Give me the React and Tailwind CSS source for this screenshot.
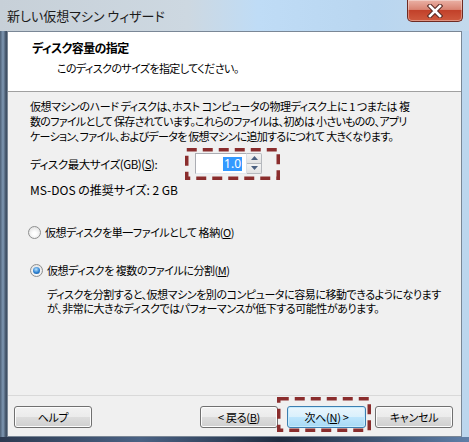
import React from "react";

const jp = "font-['Noto_Sans_CJK_JP','Noto_Sans',sans-serif] [font-feature-settings:'palt']";

function DashBox({ w, h, className }) {
  return (
    <svg className={"pointer-events-none absolute " + className} width={w} height={h}>
      <rect x="1.75" y="1.75" width={w - 3.5} height={h - 3.5} fill="none" stroke="#8a2d2d" strokeWidth="3.5" strokeDasharray="10 6" />
    </svg>
  );
}

function Radio({ checked }) {
  return (
    <span className="inline-flex h-[13px] w-[13px] shrink-0 items-center justify-center rounded-full border border-[#8e8f8f] bg-[radial-gradient(circle_at_50%_60%,#ffffff_20%,#d7d7d7)]">
      {checked && (
        <span className="h-[7px] w-[7px] rounded-full bg-[radial-gradient(circle_at_45%_35%,#b9e4ff,#2b7fd0_55%,#15508f)]" />
      )}
    </span>
  );
}

function Btn({ children, primary }) {
  return (
    <div
      className={
        primary
          ? "flex h-[22px] w-[79px] items-center justify-center rounded-[3px] border border-[#3c7fb1] bg-[linear-gradient(#eaf6fd,#d9f0fc_50%,#bee6fd_50%,#a7d9f5)] text-[11px] leading-[15px] tracking-[-0.3px] text-black shadow-[inset_0_0_0_1px_#c9ecfd]"
          : "flex h-[22px] w-[78px] items-center justify-center rounded-[3px] border border-[#707070] bg-[linear-gradient(#f2f2f2,#ebebeb_50%,#dddddd_50%,#cfcfcf)] text-[11px] leading-[15px] tracking-[-0.3px] text-black shadow-[inset_0_0_0_1px_#fcfcfc]"
      }
    >
      {children}
    </div>
  );
}

export default function App() {
  return (
    <div className={"relative flex h-[442px] w-[469px] flex-col overflow-hidden bg-[linear-gradient(90deg,#4d5f75_0px,#7f98b3_3px,#3f4f63_6px,#9fb8d0_40px,#c4ddf3_200px,#bcd6ee_100%)] " + jp}>
      {/* title bar */}
      <div className="flex h-[31px] shrink-0 items-start justify-between bg-[linear-gradient(90deg,#c7d0d8,#cdd8e1_40%,#bfdcf6_55%,#b9d6f0_80%,#c3d9ec)]">
        <div className="pl-[7px] pt-[8px] text-[13px] leading-[16px] text-[#1b1b1b]">新しい仮想マシン ウィザード</div>
        <div className="mr-[6px] flex h-[22px] w-[56px] items-center justify-center rounded-b-[5px] border border-t-0 border-[#6e2a22] bg-[linear-gradient(#eab1a5,#d98473_45%,#c2412a_50%,#cf5a3f)] shadow-[inset_0_0_0_1px_rgba(255,255,255,0.35)]">
          <svg width="16" height="14" viewBox="0 0 16 14">
            <path d="M3 2 L13 12 M13 2 L3 12" stroke="#5a2a24" strokeWidth="4.6" strokeLinecap="square" />
            <path d="M3 2 L13 12 M13 2 L3 12" stroke="#ffffff" strokeWidth="2.6" strokeLinecap="square" />
          </svg>
        </div>
      </div>

      {/* client */}
      <div className="mx-[7px] flex h-[406px] shrink-0 flex-col border border-[#7a8796] bg-[#f0f0f0] text-black">
        {/* header */}
        <div className="h-[60px] shrink-0 border-b border-[#a0a0a0] bg-white pl-[24px] pt-[8px]">
          <div className="text-[12px] font-bold leading-[15px] tracking-[-0.6px]">ディスク容量の指定</div>
          <div className="ml-[25px] mt-[6px] text-[11px] leading-[15px] tracking-[-0.6px]">このディスクのサイズを指定してください。</div>
        </div>

        {/* body */}
        <div className="flex h-[303px] shrink-0 flex-col pt-[7px] text-[11px] leading-[15px] tracking-[-0.45px]">
          <div className="whitespace-nowrap pl-[22px]">
            <div>仮想マシンのハード ディスクは、ホスト コンピュータの物理ディスク上に 1 つまたは 複</div>
            <div className="tracking-[-0.7px]">数のファイルとして 保存されています。これらのファイルは、初めは 小さいものの、アプリ</div>
            <div className="tracking-[-0.7px]">ケーション、ファイル、およびデータを 仮想マシンに追加するにつれて 大きくなります。</div>
          </div>

          <div className="mt-[9px] flex items-center pl-[22px]">
            <div className="w-[165px] pt-[2px] text-[11.5px]">
              ディスク最大サイズ(GB)(<span className="underline">S</span>):
            </div>
            <div className="relative flex h-[21px]">
              <DashBox w={95} h={32} className="left-[-10px] top-[-5px]" />
              <div className="flex h-[21px] w-[52px] items-center justify-end border border-[#abadb3] border-b-[#e3e9ef] border-r-[#dbdfe6] bg-white pr-[4px]">
                <span className="bg-[#3399ff] px-[1px] font-['Noto_Sans',sans-serif] text-[12px] leading-[14px] tracking-normal text-white">1.0</span>
              </div>
              <div className="flex w-[15px] flex-col">
                <div className="flex h-[10.5px] items-center justify-center rounded-tr-[2px] border border-l-0 border-[#b5b8bd] bg-[linear-gradient(#f4f4f4,#e2e2e2)]">
                  <svg width="7" height="4" viewBox="0 0 7 4"><path d="M0 4 L3.5 0 L7 4 Z" fill="#4a5f7f" /></svg>
                </div>
                <div className="flex h-[10.5px] items-center justify-center rounded-br-[2px] border border-l-0 border-t-0 border-[#b5b8bd] bg-[linear-gradient(#f4f4f4,#e2e2e2)]">
                  <svg width="7" height="4" viewBox="0 0 7 4"><path d="M0 0 L7 0 L3.5 4 Z" fill="#4a5f7f" /></svg>
                </div>
              </div>
            </div>
          </div>

          <div className="mt-[8px] pl-[22px] text-[12px] tracking-[0px]">MS-DOS の推奨サイズ: 2 GB</div>

          <div className="mt-[28px] flex items-center gap-[4px] pl-[20px]">
            <Radio />
            <span>仮想ディスクを単一ファイルとして 格納(<span className="underline">O</span>)</span>
          </div>

          <div className="mt-[23px] flex items-center gap-[4px] pl-[22px]">
            <Radio checked />
            <span>仮想ディスクを 複数のファイルに分割(<span className="underline">M</span>)</span>
          </div>

          <div className="mt-[9px] whitespace-nowrap pl-[39px] leading-[14px]">
            <div>ディスクを分割すると、仮想マシンを別のコンピュータに容易に移動できるようになります</div>
            <div>が、非常に大きなディスクではパフォーマンスが低下する可能性があります。</div>
          </div>
        </div>

        {/* footer */}
        <div className="flex h-[41px] shrink-0 items-start border-t border-[#d9d9d9] pl-[6px] pr-[8px] pt-[10px]">
          <Btn>ヘルプ</Btn>
          <div className="ml-auto flex gap-[9px]">
            <Btn>&lt; 戻る(<span className="underline">B</span>)</Btn>
            <div className="relative">
              <DashBox w={94} h={35} className="left-[-10px] top-[-9px]" />
              <Btn primary>次へ(<span className="underline">N</span>) &gt;</Btn>
            </div>
            <Btn>キャンセル</Btn>
          </div>
        </div>
      </div>
      <div className="flex-1 bg-[linear-gradient(90deg,#2d3b52,#4a6284_30%,#1f2c40_60%,#5f7fa8)]" />
    </div>
  );
}
